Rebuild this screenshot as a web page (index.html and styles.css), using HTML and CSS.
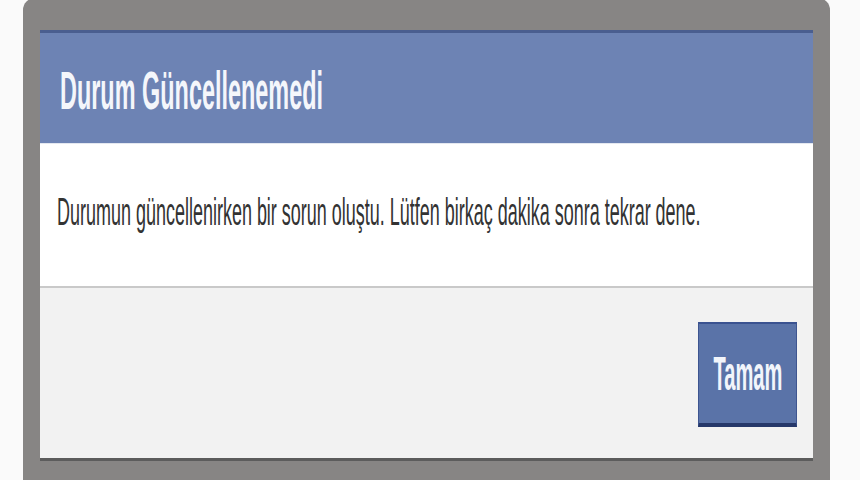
FILE: index.html
```html
<!DOCTYPE html>
<html lang="tr">
<head>
<meta charset="utf-8">
<title>Durum Güncellenemedi</title>
<link rel="stylesheet" href="styles.css">
</head>
<body>
<div class="frame">
  <div class="dialog">
    <div class="header"><span class="title">Durum Güncellenemedi</span></div>
    <div class="content"><span class="message">Durumun güncellenirken bir sorun oluştu. Lütfen birkaç dakika sonra tekrar dene.</span></div>
    <div class="footer">
      <button class="btn"><span class="btn-label">Tamam</span></button>
    </div>
  </div>
</div>
</body>
</html>
```

FILE: styles.css
```css
html, body {
  margin: 0;
  padding: 0;
}
body {
  width: 860px;
  height: 480px;
  overflow: hidden;
  background: #fafafa;
  font-family: "Liberation Sans", Arial, sans-serif;
}
.frame {
  margin-left: 23px;
  margin-top: -2px;
  width: 807px;
  height: 482px;
  box-sizing: border-box;
  padding: 32px 17px 0 17px;
  background: #878584;
  border-radius: 12px 12px 0 0;
}
.dialog {
  width: 773px;
  overflow: hidden;
}
.header {
  box-sizing: border-box;
  height: 113px;
  background: #6d83b4;
  border-top: 3px solid #4a5e8f;
  padding: 31px 0 0 20px;
  line-height: 53px;
  white-space: nowrap;
}
.title {
  display: inline-block;
  font-size: 54px;
  font-weight: bold;
  color: #f4f6fb;
  transform: scaleX(0.434);
  transform-origin: left top;
}
.content {
  box-sizing: border-box;
  height: 143px;
  background: #ffffff;
  border-top: 1px solid #e4e8f0;
  padding: 48px 0 0 17px;
  line-height: 39px;
  white-space: nowrap;
}
.message {
  display: inline-block;
  font-size: 39px;
  color: #333333;
  transform: scaleX(0.461);
  transform-origin: left top;
}
.footer {
  box-sizing: border-box;
  height: 175px;
  background: #f2f2f2;
  border-top: 2px solid #c9c9c9;
  border-bottom: 3px solid #5c5c5c;
  display: flex;
  justify-content: flex-end;
  align-items: flex-start;
  padding: 34px 16px 0 0;
}
.btn {
  box-sizing: border-box;
  width: 99px;
  height: 105px;
  margin: 0;
  padding: 0;
  background: #5a73a8;
  border: 1px solid #3e5590;
  border-top: 2px solid #3a5290;
  border-bottom: 4px solid #26386a;
  display: flex;
  justify-content: center;
  align-items: center;
  font-family: "Liberation Sans", Arial, sans-serif;
  line-height: 49px;
  white-space: nowrap;
  overflow: visible;
}
.btn-label {
  display: inline-block;
  font-size: 49px;
  font-weight: bold;
  color: #f2f5fb;
  transform: scaleX(0.41);
  transform-origin: center center;
}
```
